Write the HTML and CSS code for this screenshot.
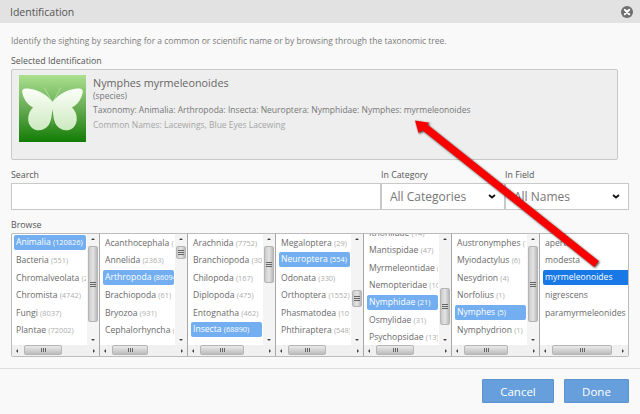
FILE: index.html
```html
<!DOCTYPE html>
<html lang="en">
<head>
<meta charset="utf-8">
<title>Identification</title>
<link rel="stylesheet" href="styles.css">
</head>
<body>
<div class="dialog">
  <header class="titlebar">
    <h1 class="title">Identification</h1>
    <svg class="close" viewBox="0 0 12 12" width="12" height="12"><circle cx="6" cy="6" r="6" fill="#6f6f6f"/><path d="M3.8 3.8l4.4 4.4M8.2 3.8L3.8 8.2" stroke="#fff" stroke-width="2" stroke-linecap="round"/></svg>
  </header>
  <main class="content">
    <p class="intro">Identify the sighting by searching for a common or scientific name or by browsing through the taxonomic tree.</p>
    <div class="label sel-label">Selected Identification</div>
    <section class="selected">
      <svg class="thumb" viewBox="0 0 200 200" width="67" height="67">
        <defs><linearGradient id="g" x1="0" y1="0" x2="0" y2="1"><stop offset="0" stop-color="#abe08f"/><stop offset=".5" stop-color="#66ab52"/><stop offset="1" stop-color="#137c05"/></linearGradient>
        <linearGradient id="w" x1="0" y1="0" x2="0" y2="1"><stop offset="0" stop-color="#fbfef8"/><stop offset="1" stop-color="#cdeabf"/></linearGradient></defs>
        <rect width="200" height="200" fill="url(#g)"/>
        <path d="M100 80C88 64 62 44 32 41 18 39 8 40 10 52 12 68 24 88 42 97 26 110 22 140 36 155 50 170 74 168 88 150 93 144 96 132 97 125L100 102 103 125C104 132 107 144 112 150 126 168 150 170 164 155 178 140 174 110 158 97 176 88 188 68 190 52 192 40 182 39 168 41 138 44 112 64 100 80Z" fill="url(#w)"/>
        <path d="M97 78L76 38M103 78L124 38" stroke="#d5eec9" stroke-width="1.5" fill="none"/>
        <path d="M100 125V148" stroke="#7ab764" stroke-width="1.5"/>
      </svg>
      <div class="sel-info">
        <div class="sel-name">Nymphes myrmeleonoides</div>
        <div class="sel-rank">(species)</div>
        <div class="sel-tax">Taxonomy: Animalia: Arthropoda: Insecta: Neuroptera: Nymphidae: Nymphes: myrmeleonoides</div>
        <div class="sel-common">Common Names: Lacewings, Blue Eyes Lacewing</div>
      </div>
    </section>
    <div class="fields">
      <div class="field">
        <label class="label" for="q">Search</label>
        <input class="input" id="q" type="text">
      </div>
      <div class="field">
        <label class="label" for="c">In Category</label>
        <div class="select-wrap">
          <select class="input select" id="c"><option>All Categories</option></select>
          <svg class="chev" viewBox="0 0 8 5" width="8" height="5"><path d="M1 1l3 2.5L7 1" fill="none" stroke="#111" stroke-width="1.8"/></svg>
        </div>
      </div>
      <div class="field">
        <label class="label" for="f">In Field</label>
        <div class="select-wrap">
          <select class="input select" id="f"><option>All Names</option></select>
          <svg class="chev" viewBox="0 0 8 5" width="8" height="5"><path d="M1 1l3 2.5L7 1" fill="none" stroke="#111" stroke-width="1.8"/></svg>
        </div>
      </div>
    </div>
    <div class="label browse-label">Browse</div>
    <div class="browse">
      <div class="col first">
        <ul class="list">
          <li class="item on">Animalia <span class="n">(120826)</span></li>
          <li class="item">Bacteria <span class="n">(551)</span></li>
          <li class="item">Chromalveolata <span class="n">(2</span></li>
          <li class="item">Chromista <span class="n">(4742)</span></li>
          <li class="item">Fungi <span class="n">(8037)</span></li>
          <li class="item">Plantae <span class="n">(72002)</span></li>
        </ul>
        <div class="vbar"><i class="up"></i><div class="vtrack"><b class="vthumb" style="margin-top:0;height:76px"></b></div><i class="down"></i></div>
        <div class="hbar"><i class="left"></i><div class="htrack"><b class="hthumb" style="width:38px"></b></div><i class="right"></i></div>
      </div>
      <div class="col">
        <ul class="list">
          <li class="item">Acanthocephala <span class="n">(7</span></li>
          <li class="item">Annelida <span class="n">(2363)</span></li>
          <li class="item on">Arthropoda <span class="n">(86094</span></li>
          <li class="item">Brachiopoda <span class="n">(61)</span></li>
          <li class="item">Bryozoa <span class="n">(931)</span></li>
          <li class="item">Cephalorhyncha <span class="n">(4</span></li>
        </ul>
        <div class="vbar"><i class="up"></i><div class="vtrack"><b class="vthumb" style="margin-top:0;height:13px"></b></div><i class="down"></i></div>
        <div class="hbar"><i class="left"></i><div class="htrack"><b class="hthumb" style="width:36px"></b></div><i class="right"></i></div>
      </div>
      <div class="col">
        <ul class="list">
          <li class="item">Arachnida <span class="n">(7752)</span></li>
          <li class="item">Branchiopoda <span class="n">(305</span></li>
          <li class="item">Chilopoda <span class="n">(167)</span></li>
          <li class="item">Diplopoda <span class="n">(475)</span></li>
          <li class="item">Entognatha <span class="n">(462)</span></li>
          <li class="item on">Insecta <span class="n">(68890)</span></li>
        </ul>
        <div class="vbar"><i class="up"></i><div class="vtrack"><b class="vthumb" style="margin-top:0;height:37px"></b></div><i class="down"></i></div>
        <div class="hbar"><i class="left"></i><div class="htrack"><b class="hthumb" style="width:44px"></b></div><i class="right"></i></div>
      </div>
      <div class="col">
        <ul class="list">
          <li class="item">Megaloptera <span class="n">(29)</span></li>
          <li class="item on">Neuroptera <span class="n">(554)</span></li>
          <li class="item">Odonata <span class="n">(330)</span></li>
          <li class="item">Orthoptera <span class="n">(1552)</span></li>
          <li class="item">Phasmatodea <span class="n">(101</span></li>
          <li class="item">Phthiraptera <span class="n">(548)</span></li>
        </ul>
        <div class="vbar"><i class="up"></i><div class="vtrack"><b class="vthumb" style="margin-top:44px;height:17px"></b></div><i class="down"></i></div>
        <div class="hbar"><i class="left"></i><div class="htrack"><b class="hthumb" style="width:38px"></b></div><i class="right"></i></div>
      </div>
      <div class="col">
        <ul class="list scrolled">
          <li class="item">Ithoniidae <span class="n">(14)</span></li>
          <li class="item">Mantispidae <span class="n">(47)</span></li>
          <li class="item">Myrmeleontidae <span class="n">(</span></li>
          <li class="item">Nemopteridae <span class="n">(10</span></li>
          <li class="item on">Nymphidae <span class="n">(21)</span></li>
          <li class="item">Osmylidae <span class="n">(31)</span></li>
          <li class="item">Psychopsidae <span class="n">(13)</span></li>
        </ul>
        <div class="vbar"><i class="up"></i><div class="vtrack"><b class="vthumb" style="margin-top:42px;height:37px"></b></div><i class="down"></i></div>
        <div class="hbar"><i class="left"></i><div class="htrack"><b class="hthumb" style="width:38px"></b></div><i class="right"></i></div>
      </div>
      <div class="col">
        <ul class="list">
          <li class="item">Austronymphes <span class="n">(7</span></li>
          <li class="item">Myiodactylus <span class="n">(6)</span></li>
          <li class="item">Nesydrion <span class="n">(4)</span></li>
          <li class="item">Norfolius <span class="n">(1)</span></li>
          <li class="item on">Nymphes <span class="n">(5)</span></li>
          <li class="item">Nymphydrion <span class="n">(1)</span></li>
        </ul>
        <div class="vbar"><i class="up"></i><div class="vtrack"><b class="vthumb" style="margin-top:0;height:76px"></b></div><i class="down"></i></div>
        <div class="hbar"><i class="left"></i><div class="htrack"><b class="hthumb" style="width:44px"></b></div><i class="right"></i></div>
      </div>
      <div class="col last">
        <ul class="list">
          <li class="item">aperta</li>
          <li class="item">modesta</li>
          <li class="item cur">myrmeleonoides</li>
          <li class="item">nigrescens</li>
          <li class="item">paramyrmeleonides</li>
        </ul>
        <div class="hbar"><i class="left"></i><div class="htrack"><b class="hthumb" style="width:60px"></b></div><i class="right"></i></div>
      </div>
    </div>
  </main>
  <footer class="footer">
    <button class="btn cancel" type="button">Cancel</button>
    <button class="btn done" type="button">Done</button>
  </footer>
  <svg class="arrow" viewBox="0 0 640 414" width="640" height="414">
    <path d="M415 120.5L429.5 122.7 427.3 124.6 598.8 261.1 594.2 266.9 422.7 130.4 418.5 133Z" fill="#fb0000"/>
  </svg>
</div>
</body>
</html>
```
FILE: styles.css
```css
* { box-sizing: border-box; }
html, body { margin: 0; padding: 0; }
body { width: 640px; height: 414px; overflow: hidden; background: #f9f9f9; font-family: "Open Sans", sans-serif; color: #666; }
.dialog { position: relative; width: 640px; height: 414px; display: flex; flex-direction: column; }
.titlebar { height: 23px; flex: none; background: #e2e2e2; display: flex; align-items: center; justify-content: space-between; padding: 0 7px 0 10px; }
.title { margin: 0; font-size: 10.5px; font-weight: 400; color: #555; }
.close { display: block; }
.content { padding: 0 11px; height: 345px; flex: none; }
.intro { margin: 11px 0 0; height: 14px; font-size: 8.5px; line-height: 14px; color: #7b7b7b; white-space: nowrap; }
.label { display: block; font-size: 8.8px; line-height: 12px; height: 12px; color: #555; }
.sel-label { margin-top: 7px; }
.selected { margin-top: 2px; width: 607px; height: 91px; background: #eeeeee; border: 1px solid #c8c8c8; border-radius: 2px; display: flex; padding: 5px 7px; gap: 7px; }
.thumb { display: block; flex: none; }
.sel-name { font-size: 10.8px; line-height: 15px; color: #666; }
.sel-rank { font-size: 8.5px; line-height: 11px; color: #777; }
.sel-tax { font-size: 8.5px; line-height: 14px; margin-top: 2px; color: #777; }
.sel-common { font-size: 8.5px; line-height: 14px; margin-top: 1px; color: #a5a5a5; }
.fields { margin-top: 9px; display: grid; grid-template-columns: 370px 124px 124px; }
.field { display: flex; flex-direction: column; gap: 2px; }
.input { display: block; height: 27px; width: 100%; background: #fff; border: 1px solid #c9c9c9; border-radius: 0; font-family: "Open Sans", sans-serif; font-size: 12px; color: #777; padding: 0 8px; margin: 0; }
.select { appearance: none; }
.select-wrap { position: relative; }
.chev { position: absolute; right: 9px; top: 11px; }
.browse-label { margin-top: 9px; }
.browse { margin-top: 2px; height: 124px; width: 618px; display: grid; grid-template-columns: repeat(7, 1fr); border: 1px solid #bcbcbc; border-radius: 2px; background: #fff; }
.col { min-width: 0; display: grid; grid-template-columns: 1fr 12px; grid-template-rows: 1fr 11px; overflow: hidden; border-right: 1px solid #a8a8a8; }
.col.last { border-right: 0; grid-template-columns: 1fr; }
.list { list-style: none; margin: 0; padding: 1px 1px 0 3px; min-width: 0; overflow: hidden; }
.first .list { padding-left: 2px; }
.last .list { padding-right: 0; }
.list.scrolled { padding-top: 0; margin-top: -9px; }
.item { height: 17.4px; line-height: 16px; padding-left: 2px; font-size: 8.6px; color: #6a6a6a; white-space: nowrap; overflow: hidden; border-radius: 2px; }
.n { font-size: 7.4px; color: #adadad; }
.on { background: #72aef0; color: #fff; height: 15px; line-height: 15px; margin: 0 0 2.4px; }
.on .n { color: #fff; }
.cur { background: #1778e6; color: #fff; height: 15px; line-height: 15px; margin: 0 0 2.4px; border-radius: 2px 0 0 2px; }
.vbar { display: flex; flex-direction: column; background: #f4f4f4; height: 100%; min-height: 0; }
.vtrack { flex: 1; padding: 0 1px; min-height: 0; }
.vthumb { display: flex; align-items: center; justify-content: center; background: linear-gradient(90deg, #c9c9c9, #e4e4e4 50%, #b9b9b9); border: 1px solid #b5b5b5; border-radius: 2px; }
.vthumb::after { content: ""; width: 6px; height: 5px; background: repeating-linear-gradient(180deg, #666 0 1px, transparent 1px 2px); }
.up, .down { flex: none; height: 12px; position: relative; display: block; }
.up::after, .down::after, .left::after, .right::after { content: ""; position: absolute; left: 50%; top: 50%; width: 0; height: 0; margin: -2px 0 0 -2px; border: 2px solid transparent; }
.up::after { border-bottom-color: #444; margin-top: -4px; }
.down::after { border-top-color: #444; margin-top: 0; }
.left::after { border-right-color: #444; margin-left: -4px; }
.right::after { border-left-color: #444; margin-left: 0; }
.hbar { grid-column: 1 / -1; display: flex; background: #f0f0f0; }
.left, .right { flex: none; width: 12px; position: relative; display: block; }
.htrack { flex: 1; min-width: 0; padding: 0; }
.hthumb { display: flex; align-items: center; justify-content: center; height: 10px; background: linear-gradient(180deg, #e9e9e9, #bdbdbd); border: 1px solid #b5b5b5; border-radius: 2px; }
.hthumb::after { content: ""; width: 5px; height: 4px; background: repeating-linear-gradient(90deg, #666 0 1px, transparent 1px 2px); }
.footer { flex: 1; border-top: 1px solid #dedede; display: flex; justify-content: flex-end; gap: 10px; padding: 10px 11px 0 0; }
.btn { height: 24px; border: 1px solid #5a93cf; border-radius: 1px; background: #679fdc; color: #fff; font-family: "Open Sans", sans-serif; font-size: 11.5px; padding: 0; }
.cancel { width: 72px; }
.done { width: 65px; }
.arrow { position: absolute; left: 0; top: 0; pointer-events: none; filter: drop-shadow(1px 1px 1px rgba(0,0,0,.75)); }
```
